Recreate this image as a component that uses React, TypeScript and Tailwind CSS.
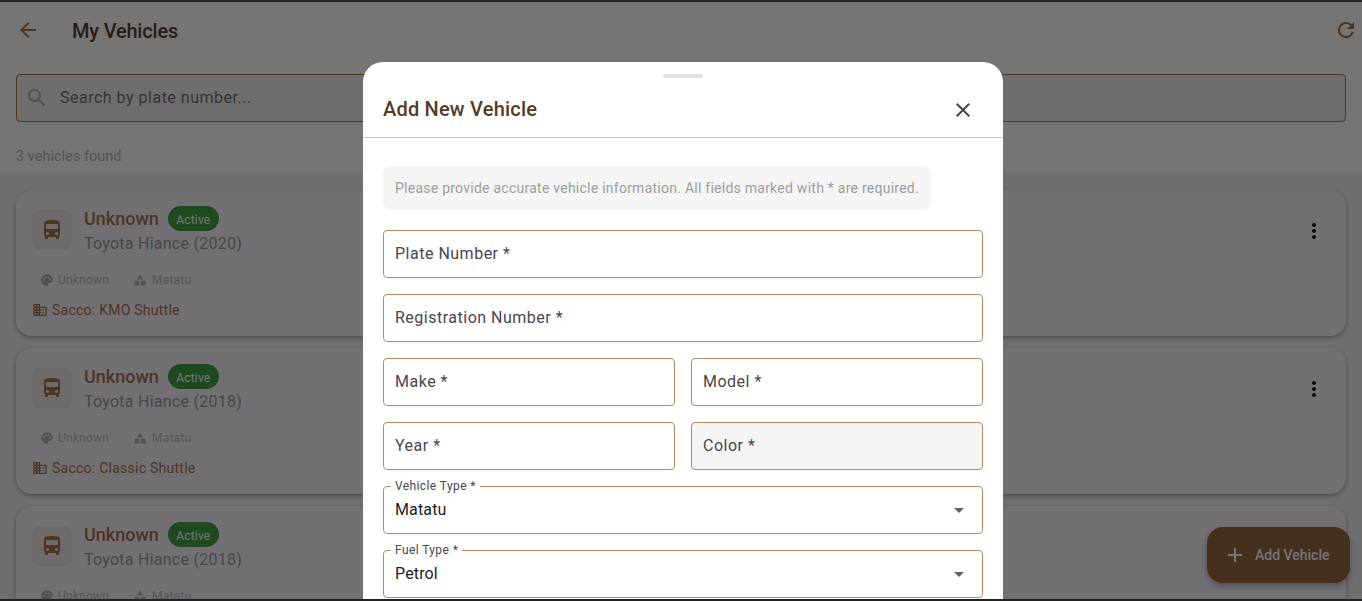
import {
  MdAdd,
  MdArrowBack,
  MdArrowDropDown,
  MdBusiness,
  MdCategory,
  MdClose,
  MdDirectionsBus,
  MdMoreVert,
  MdPalette,
  MdRefresh,
  MdSearch,
} from "react-icons/md";

const vehicles = [
  { year: 2020, sacco: "KMO Shuttle" },
  { year: 2018, sacco: "Classic Shuttle" },
  { year: 2018, sacco: "Metro Shuttle" },
];

const VehicleCard = ({ year, sacco }: { year: number; sacco: string }) => (
  <div className="h-[146px] shrink-0 rounded-2xl bg-[#f8f4fb] shadow-[0_2px_4px_rgba(0,0,0,0.3)] px-4 pt-5 flex justify-between">
    <div>
      <div className="flex gap-3">
        <div className="w-10 h-10 rounded-lg bg-[#f1e9e6] flex items-center justify-center">
          <MdDirectionsBus className="text-[#a9744f]" size={24} />
        </div>
        <div className="-mt-[5px]">
          <div className="flex items-center gap-[9px] h-[27px]">
            <span className="text-[18px] font-medium text-[#a9744f]">Unknown</span>
            <span className="h-[25px] w-[51px] pt-[2px] rounded-full bg-[#45a049] text-white text-xs tracking-[0.2px] flex items-center justify-center">
              Active
            </span>
          </div>
          <div className="text-base tracking-[0.25px] text-[#9e9e9e] leading-[24px]">
            Toyota Hiance ({year})
          </div>
        </div>
      </div>
      <div className="flex items-center mt-[15px] pl-2 text-xs tracking-[0.2px] text-[#bdbdbd] h-[18px]">
        <MdPalette size={14} className="text-[#b5b5b5]" />
        <span className="ml-1">Unknown</span>
        <MdCategory size={14} className="ml-6 text-[#b5b5b5]" />
        <span className="ml-[5px]">Matatu</span>
      </div>
      <div className="flex items-center mt-[9px] h-6 text-sm tracking-[0.25px] text-[#a9744f]">
        <MdBusiness size={16} />
        <span className="ml-[4px]">Sacco: {sacco}</span>
      </div>
    </div>
    <MdMoreVert className="text-[#1c1b1f] mt-[9px] mr-1" size={24} />
  </div>
);

const Field = ({ label, filled }: { label: string; filled?: boolean }) => (
  <div
    className={`h-12 rounded border border-[#b58a63] px-[11px] flex items-center text-base tracking-[0.5px] text-[#49454f] ${filled ? "bg-[#f5f5f5]" : "bg-white"}`}
  >
    {label}
  </div>
);

const SelectField = ({ label, value }: { label: string; value: string }) => (
  <div className="relative h-12 rounded border border-[#b58a63] pl-[11px] pr-3 flex items-center justify-between text-base tracking-[0.15px] text-[#1c1b1f]">
    <span className="absolute left-[7px] -top-[9px] bg-white px-[4px] text-xs leading-[16px] tracking-[0.4px] text-[#49454f]">
      {label}
    </span>
    <span>{value}</span>
    <MdArrowDropDown className="text-[#616161] mr-[-1px]" size={24} />
  </div>
);

export default function App() {
  return (
    <div className="relative h-[601px] overflow-hidden border-y-2 border-[#222222] bg-white font-['Roboto',sans-serif]">
      <header className="h-[171px] bg-white">
        <div className="h-[56px] flex items-center pl-4 pr-1">
          <MdArrowBack className="text-[#a9744f]" size={24} />
          <h1 className="ml-8 flex-1 pt-[2px] text-xl font-medium text-[#5d4037] tracking-[-0.2px]">My Vehicles</h1>
          <MdRefresh className="text-[#a9744f]" size={24} />
        </div>
        <div className="mx-4 mt-4 h-12 rounded border border-[#a9744f] bg-[#f0f0f0] pl-2 flex items-center">
          <MdSearch className="text-[#b0b0b0]" size={24} />
          <span className="ml-[11px] text-base tracking-[0.5px] text-[#757575]">Search by plate number...</span>
        </div>
        <div className="mt-6 px-4 text-sm tracking-[0.25px] text-[#b5b5b5]">3 vehicles found</div>
      </header>

      <main className="h-[500px] bg-[#f1f0f5] px-4 pt-[17px] flex flex-col gap-3">
        {vehicles.map((v) => (
          <VehicleCard key={v.sacco} year={v.year} sacco={v.sacco} />
        ))}
      </main>

      <button className="absolute left-[1207px] top-[525px] w-[143px] h-14 rounded-2xl bg-[#96663f] text-white shadow-[0_3px_6px_rgba(0,0,0,0.3)] flex items-center pl-4 text-sm font-medium">
        <MdAdd size={24} />
        <span className="ml-2">Add Vehicle</span>
      </button>

      <div className="absolute inset-0 bg-black/54" />

      <div className="absolute left-[363px] top-[60px] w-[640px] h-[600px] rounded-t-[20px] bg-white">
        <div className="flex justify-center pt-3">
          <div className="w-10 h-1 rounded-sm bg-[#e0e0e0]" />
        </div>
        <div className="h-[60px] border-b border-[#cac4d0] pl-5 pr-[28px] pt-[2px] flex items-center justify-between">
          <h2 className="text-xl font-medium tracking-[0.2px] text-[#553a28]">Add New Vehicle</h2>
          <MdClose className="text-[#49454f] mt-[2px]" size={24} />
        </div>
        <div className="px-5 pt-7 flex flex-col gap-4">
          <div className="self-start h-11 mb-1 rounded-lg bg-[#f5f5f5] px-3 flex items-center text-sm tracking-[0.25px] text-[#9e9e9e]">
            Please provide accurate vehicle information. All fields marked with * are required.
          </div>
          <Field label="Plate Number *" />
          <Field label="Registration Number *" />
          <div className="grid grid-cols-2 gap-4">
            <Field label="Make *" />
            <Field label="Model *" />
          </div>
          <div className="grid grid-cols-2 gap-4">
            <Field label="Year *" />
            <Field label="Color *" filled />
          </div>
          <SelectField label="Vehicle Type *" value="Matatu" />
          <SelectField label="Fuel Type *" value="Petrol" />
        </div>
      </div>
    </div>
  );
}
